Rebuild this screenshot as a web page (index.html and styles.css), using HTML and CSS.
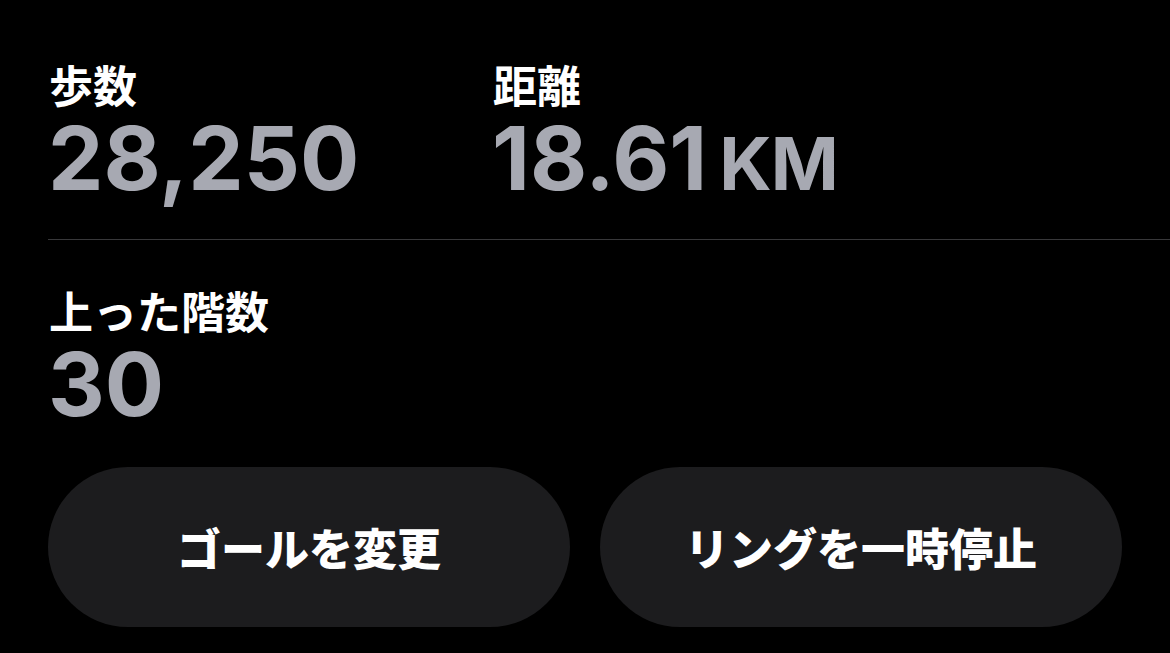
FILE: index.html
```html
<!DOCTYPE html>
<html lang="ja">
<head>
<meta charset="utf-8">
<title>アクティビティ</title>
<link rel="stylesheet" href="styles.css">
</head>
<body>
<main class="screen">
  <section class="stats-row first">
    <div class="stat stat-steps">
      <div class="label">歩数</div>
      <div class="value">28,250</div>
    </div>
    <div class="stat">
      <div class="label">距離</div>
      <div class="value">18.61<span class="unit">KM</span></div>
    </div>
  </section>
  <div class="divider"></div>
  <section class="stats-row second">
    <div class="stat">
      <div class="label">上った階数</div>
      <div class="value">30</div>
    </div>
  </section>
  <div class="actions">
    <button class="pill">ゴールを変更</button>
    <button class="pill">リングを一時停止</button>
  </div>
</main>
</body>
</html>
```

FILE: styles.css
```css
html, body {
  margin: 0;
  padding: 0;
  background: #000;
}
body {
  width: 1170px;
  height: 653px;
  overflow: hidden;
  font-family: "Inter", "Noto Sans CJK JP", sans-serif;
  color: #fff;
}
.screen {
  display: flex;
  flex-direction: column;
}
.stats-row {
  display: flex;
  padding-left: 48px;
}
.stats-row.first {
  padding-top: 54px;
}
.stat-steps {
  width: 444px;
}
.label {
  font-family: "Noto Sans CJK JP", sans-serif;
  font-weight: 700;
  font-size: 44px;
  line-height: 60px;
  color: #fff;
  padding-left: 1px;
}
.value {
  font-family: "Inter", "Liberation Sans", sans-serif;
  font-weight: 700;
  font-size: 88px;
  line-height: 88px;
  color: #a7a9b2;
  letter-spacing: 0;
}
.unit {
  font-size: 73px;
  line-height: 0;
  margin-left: 12px;
  letter-spacing: -1px;
}
.divider {
  margin: 37px 0 0 48px;
  height: 1px;
  background: #38383a;
}
.stats-row.second {
  padding-top: 40px;
}
.actions {
  display: flex;
  gap: 30px;
  padding: 39px 0 0 48px;
}
.pill {
  width: 522px;
  height: 160px;
  border: none;
  border-radius: 80px;
  background: #1c1c1e;
  color: #fff;
  font-family: "Noto Sans CJK JP", sans-serif;
  font-weight: 900;
  font-size: 44px;
  padding: 0;
  display: flex;
  align-items: center;
  justify-content: center;
}
```
